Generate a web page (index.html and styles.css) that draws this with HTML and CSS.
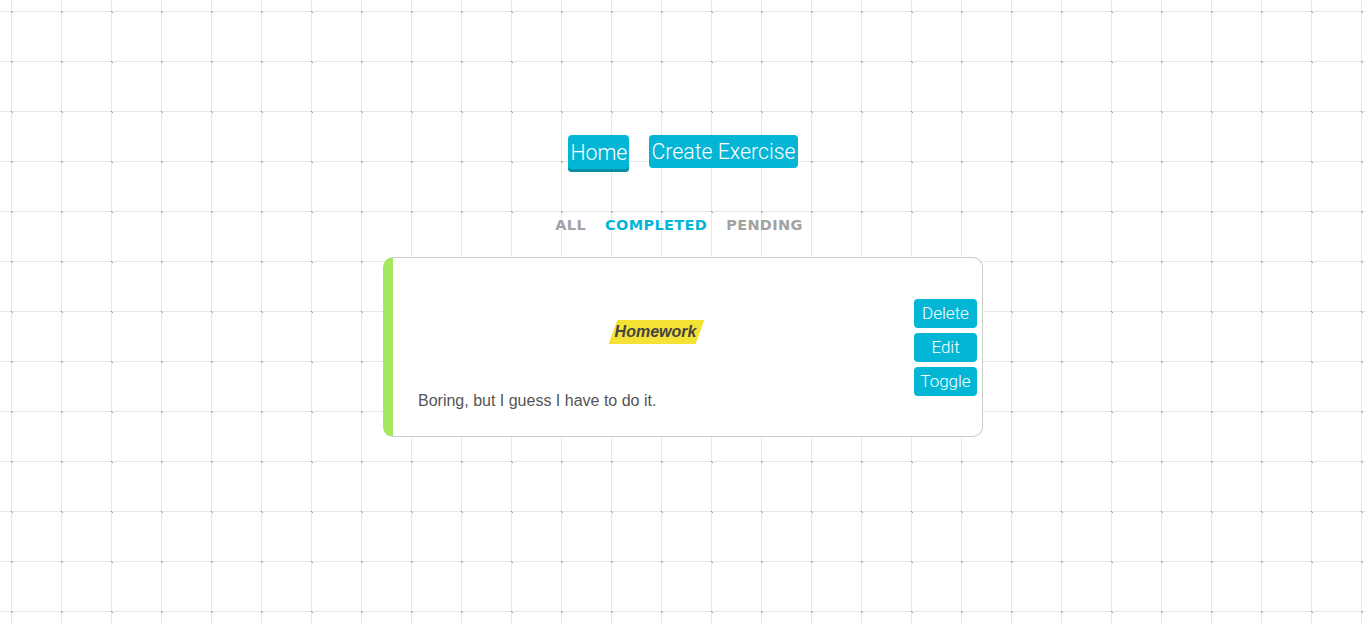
FILE: index.html
```html
<!DOCTYPE html>
<html lang="en">
<head>
<meta charset="utf-8">
<title>Exercises</title>
<link rel="stylesheet" href="styles.css">
</head>
<body>
<div class="page">
  <nav class="nav">
    <button class="nav-btn active">Home</button>
    <button class="nav-btn">Create Exercise</button>
  </nav>
  <div class="filters">
    <span class="filter">ALL</span>
    <span class="filter current">COMPLETED</span>
    <span class="filter">PENDING</span>
  </div>
  <div class="card">
    <div class="card-body">
      <div class="title-row"><h3 class="title">Homework</h3></div>
      <p class="details">Boring, but I guess I have to do it.</p>
    </div>
    <div class="actions">
      <button class="act-btn">Delete</button>
      <button class="act-btn">Edit</button>
      <button class="act-btn">Toggle</button>
    </div>
  </div>
</div>
</body>
</html>
```
FILE: styles.css
```css
html, body {
  margin: 0;
  padding: 0;
}
body {
  min-height: 625px;
  background-color: #ffffff;
  background-image:
    url("data:image/svg+xml,%3Csvg xmlns='http://www.w3.org/2000/svg' width='50' height='50'%3E%3Cpath d='M0 0.5H50M0.5 0V50' stroke='%23e8e8e8' stroke-width='1'/%3E%3Cpath d='M-1 -1L2 2M2 -1L-1 2' stroke='%23888' stroke-width='0.8'/%3E%3C/svg%3E");
  background-size: 50px 50px;
  background-position: 11px 11px;
  font-family: "Liberation Sans", Arial, sans-serif;
}
.page {
  display: flex;
  flex-direction: column;
  align-items: center;
  padding-top: 135px;
}
.nav {
  display: flex;
  gap: 20px;
  align-items: flex-start;
  height: 40px;
}
.nav-btn {
  font-family: "Roboto", sans-serif;
  font-weight: 300;
  font-size: 21.3px;
  color: #ffffff;
  background: #03b6d6;
  border: none;
  border-radius: 4px;
  height: 33px;
  padding: 0 2px;
  line-height: 33px;
  cursor: pointer;
}
.nav-btn.active {
  height: 37px;
  box-shadow: inset 0 -3px 0 #0a8fa7;
  padding-bottom: 3px;
}
.filters {
  display: flex;
  gap: 19px;
  margin-top: 40px;
  height: 20px;
  align-items: center;
  padding-right: 8px;
}
.filter {
  font-family: "DejaVu Sans", sans-serif;
  font-weight: bold;
  font-size: 14.5px;
  letter-spacing: 0.35px;
  color: #a2a2a2;
}
.filter.current {
  color: #03b6d6;
}
.card {
  margin-top: 22px;
  width: 589px;
  height: 178px;
  border: 1px solid #cccccc;
  border-left: 10px solid #a3e85f;
  border-radius: 10px;
  background: #ffffff;
  display: flex;
  align-items: center;
  box-sizing: content-box;
}
.card-body {
  flex: 1;
  display: flex;
  flex-direction: column;
  padding: 0 0 0 10px;
  align-self: stretch;
}
.title-row {
  display: flex;
  justify-content: center;
  margin-top: 62px;
}
.title {
  position: relative;
  margin: 0;
  font-family: "Liberation Sans", Arial, sans-serif;
  font-style: italic;
  font-weight: bold;
  font-size: 16px;
  color: #444444;
  line-height: 24px;
  padding: 0 3px 0 2px;
  z-index: 0;
}
.title::before {
  content: "";
  position: absolute;
  inset: 0;
  background: #f4e235;
  transform: skewX(-20deg);
  z-index: -1;
}
.details {
  margin: 47px 0 0 15px;
  font-size: 16px;
  color: #555555;
  line-height: 20px;
}
.actions {
  display: flex;
  flex-direction: column;
  gap: 5px;
  padding-right: 5px;
  padding-left: 5px;
}
.act-btn {
  font-family: "Roboto", sans-serif;
  font-weight: 300;
  font-size: 17px;
  color: #ffffff;
  background: #03b6d6;
  border: none;
  border-radius: 4px;
  width: 63px;
  height: 29px;
  padding: 0;
  cursor: pointer;
}
```
